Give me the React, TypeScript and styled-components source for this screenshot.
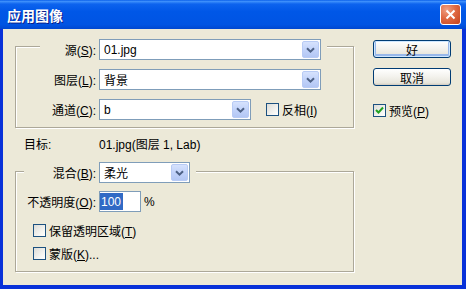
import React from "react";
import styled, { createGlobalStyle } from "styled-components";

const GlobalStyle = createGlobalStyle`
  html, body {
    margin: 0;
    padding: 0;
    background: #ffffff;
  }
  body {
    font-family: "Liberation Sans", "Noto Sans CJK SC", sans-serif;
    font-size: 12px;
    color: #000;
  }
`;

const Window = styled.div`
  width: 466px;
  height: 289px;
  display: flex;
  flex-direction: column;
  overflow: hidden;
`;

const TitleBar = styled.div`
  height: 29px;
  flex: none;
  box-sizing: border-box;
  display: flex;
  align-items: center;
  justify-content: space-between;
  padding: 0 5px 0 7px;
  background: linear-gradient(
    to bottom,
    #0a5fea 0%,
    #3d8ffb 5%,
    #0d63ee 14%,
    #0057e7 40%,
    #0054e3 85%,
    #0047d0 100%
  );
`;

const Title = styled.span`
  font-family: "Noto Sans CJK SC", sans-serif;
  font-size: 14px;
  font-weight: 700;
  color: #fff;
  text-shadow: 1px 1px 0 #0a1f8a;
`;

const CloseButton = styled.span`
  width: 21px;
  height: 21px;
  box-sizing: border-box;
  border: 1px solid #fff;
  border-radius: 3px;
  background: radial-gradient(circle at 30% 25%, #f0a083 0%, #e06a43 45%, #c4411b 100%);
  display: flex;
  align-items: center;
  justify-content: center;
`;

const Body = styled.div`
  flex: 1;
  background: #ece9d8;
  border-style: solid;
  border-color: #0831d9;
  border-width: 0 4px 4px 3px;
  display: grid;
  grid-template-columns: 339px 78px;
  column-gap: 19px;
  align-items: start;
  padding: 10px 0 0 12px;
`;

const LeftColumn = styled.div`
  display: flex;
  flex-direction: column;
`;

const RightColumn = styled.div`
  display: flex;
  flex-direction: column;
  align-items: flex-start;
  padding-top: 1px;
`;

const Group = styled.fieldset<{ $top: number; $bottom: number }>`
  margin: 0;
  min-width: 0;
  padding: ${(p) => p.$top}px 0 ${(p) => p.$bottom}px;
  border: 1px solid #aca899;
  box-shadow: inset 1px 1px 0 #fff, 1px 1px 0 #fff;
`;

const Legend = styled.legend<{ $indent: number; $h: number }>`
  margin-left: ${(p) => p.$indent}px;
  padding: 0 6px 0 0;
  height: ${(p) => p.$h}px;
  background: #ece9d8;
`;

const Rows = styled.div<{ $indent: number; $gap: number; $mt?: number }>`
  display: flex;
  flex-direction: column;
  gap: ${(p) => p.$gap}px;
  padding-left: ${(p) => p.$indent}px;
  margin-top: ${(p) => p.$mt ?? 0}px;
`;

const Row = styled.div`
  display: flex;
  align-items: center;
  height: 21px;
  gap: 3px;
`;

const Label = styled.span<{ $w: number; $align?: string }>`
  width: ${(p) => p.$w}px;
  flex: none;
  text-align: ${(p) => p.$align ?? "right"};
  white-space: nowrap;
`;

const Key = styled.span`
  text-decoration: underline;
`;

const SelectBox = styled.div<{ $w: number }>`
  width: ${(p) => p.$w}px;
  height: 21px;
  flex: none;
  box-sizing: border-box;
  border: 1px solid #7f9db9;
  background: #fff;
  display: flex;
  align-items: center;
  padding: 1px;
`;

const SelectText = styled.span`
  flex: 1;
  padding-left: 3px;
  white-space: nowrap;
`;

const ArrowButton = styled.span`
  width: 17px;
  align-self: stretch;
  box-sizing: border-box;
  border: 1px solid #b8cbf5;
  border-radius: 2px;
  background: linear-gradient(to bottom, #d6e2fd 0%, #c2d3fa 50%, #b3c7f4 100%);
  display: flex;
  align-items: center;
  justify-content: center;
`;

const CheckRow = styled.label<{ $ml?: number; $mt?: number }>`
  display: flex;
  align-items: center;
  gap: 3px;
  height: 17px;
  margin-left: ${(p) => p.$ml ?? 0}px;
  margin-top: ${(p) => p.$mt ?? 0}px;
  white-space: nowrap;
`;

const Box = styled.span`
  width: 13px;
  height: 13px;
  flex: none;
  box-sizing: border-box;
  border: 1px solid #1c5180;
  background: linear-gradient(135deg, #dcdcd7 0%, #f6f6f3 70%, #ffffff 100%);
  display: flex;
  align-items: center;
  justify-content: center;
`;

const InfoRow = styled.div`
  display: flex;
  align-items: center;
  height: 14px;
  margin: 8px 0 12px;
  padding-left: 9px;
`;

const TextField = styled.div`
  width: 42px;
  height: 21px;
  flex: none;
  box-sizing: border-box;
  border: 1px solid #7f9db9;
  background: #fff;
  padding: 1px 0;
  display: flex;
`;

const Selected = styled.span`
  background: #316ac5;
  color: #fff;
  padding: 0 2px 0 1px;
  display: flex;
  align-items: center;
`;

const Button = styled.button<{ $primary?: boolean }>`
  width: 78px;
  height: 18px;
  box-sizing: border-box;
  border: 1px solid #003c74;
  border-radius: 3px;
  padding: 0;
  margin: 0 0 10px;
  font: inherit;
  color: #000;
  background: linear-gradient(to bottom, #ffffff 0%, #f4f3ee 45%, #e8e6dc 85%, #d6d0c5 100%);
  box-shadow: ${(p) =>
    p.$primary ? "inset 0 0 0 1px #cee7ff, inset 0 -1px 0 2px #98b8ea" : "inset 0 -1px 0 #d6d0c5"};
  display: flex;
  align-items: center;
  justify-content: center;
`;

const Chevron = () => (
  <svg width="9" height="6" viewBox="0 0 9 6">
    <path d="M1 1.2 L4.5 4.6 L8 1.2" fill="none" stroke="#4d6185" strokeWidth="2" />
  </svg>
);

const Select = ({ value, width }: { value: string; width: number }) => (
  <SelectBox $w={width}>
    <SelectText>{value}</SelectText>
    <ArrowButton>
      <Chevron />
    </ArrowButton>
  </SelectBox>
);

const Checkbox = ({
  checked,
  children,
  ml,
  mt,
}: {
  checked?: boolean;
  children: React.ReactNode;
  ml?: number;
  mt?: number;
}) => (
  <CheckRow $ml={ml} $mt={mt}>
    <Box>
      {checked && (
        <svg width="9" height="9" viewBox="0 0 9 9">
          <path d="M1 4 L3.5 6.5 L8 1.5" fill="none" stroke="#21a121" strokeWidth="2" />
        </svg>
      )}
    </Box>
    <span>{children}</span>
  </CheckRow>
);

const App = () => {
  return (
    <>
      <GlobalStyle />
      <Window>
        <TitleBar>
          <Title>应用图像</Title>
          <CloseButton>
            <svg width="11" height="11" viewBox="0 0 11 11">
              <path d="M1.5 1.5 L9.5 9.5 M9.5 1.5 L1.5 9.5" stroke="#fff" strokeWidth="2" />
            </svg>
          </CloseButton>
        </TitleBar>
        <Body>
          <LeftColumn>
            <Group $top={16} $bottom={7}>
              <Legend $indent={24} $h={14}>
                <Row>
                  <Label $w={56}>
                    源(<Key>S</Key>):
                  </Label>
                  <Select value="01.jpg" width={222} />
                </Row>
              </Legend>
              <Rows $indent={24} $gap={9}>
                <Row>
                  <Label $w={56}>
                    图层(<Key>L</Key>):
                  </Label>
                  <Select value="背景" width={222} />
                </Row>
                <Row>
                  <Label $w={56}>
                    通道(<Key>C</Key>):
                  </Label>
                  <Select value="b" width={152} />
                  <Checkbox ml={12}>
                    反相(<Key>I</Key>)
                  </Checkbox>
                </Row>
              </Rows>
            </Group>

            <InfoRow>
              <Label $w={75} $align="left">
                目标:
              </Label>
              <span>01.jpg(图层 1, Lab)</span>
            </InfoRow>

            <Group $top={11} $bottom={9}>
              <Legend $indent={8} $h={18}>
                <Row>
                  <Label $w={72}>
                    混合(<Key>B</Key>):
                  </Label>
                  <Select value="柔光" width={91} />
                </Row>
              </Legend>
              <Rows $indent={8} $gap={0}>
                <Row>
                  <Label $w={72}>
                    不透明度(<Key>O</Key>):
                  </Label>
                  <TextField>
                    <Selected>100</Selected>
                  </TextField>
                  <span>%</span>
                </Row>
              </Rows>
              <Rows $indent={17} $gap={6} $mt={10}>
                <Checkbox>
                  保留透明区域(<Key>T</Key>)
                </Checkbox>
                <Checkbox>
                  蒙版(<Key>K</Key>)...
                </Checkbox>
              </Rows>
            </Group>
          </LeftColumn>

          <RightColumn>
            <Button $primary>好</Button>
            <Button>取消</Button>
            <Checkbox checked mt={6}>
              预览(<Key>P</Key>)
            </Checkbox>
          </RightColumn>
        </Body>
      </Window>
    </>
  );
};

export default App;
